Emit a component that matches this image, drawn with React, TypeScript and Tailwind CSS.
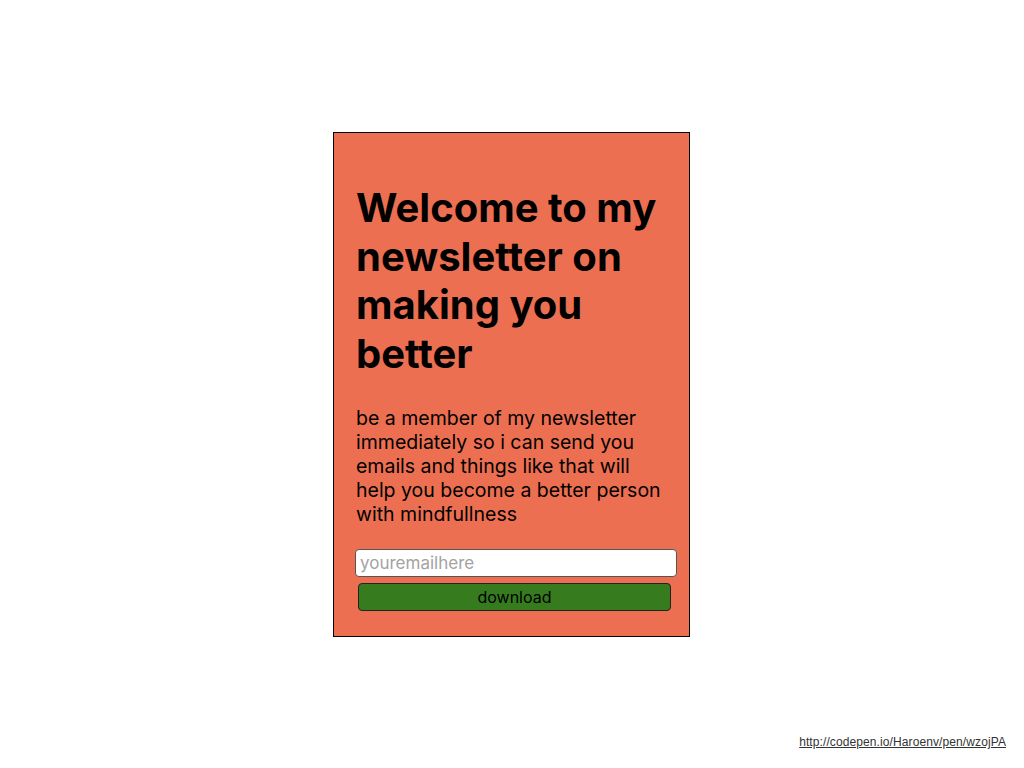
const App = () => {
  return (
    <div className="relative h-[768px] w-full bg-white font-['Inter','Liberation_Sans',sans-serif] text-black">
      <div className="pt-[132px] pl-[333px]">
        <div className="w-[357px] h-[505px] border border-black bg-[#ed6f51] px-[22px] pt-[51px]">
          <h1 className="text-[40px] font-bold leading-[48.5px]">
            Welcome to my newsletter on making you better
          </h1>
          <p className="mt-[28px] text-[19.5px] leading-[24px]">
            be a member of my newsletter immediately so i can send you emails
            and things like that will help you become a better person with
            mindfullness
          </p>
          <input
            type="email"
            placeholder="youremailhere"
            className="
            mt-[23px]
            -ml-px
            block
            w-[322px]
            h-[28px]
            px-[4px]
            bg-white
            border
            border-[#555]
            rounded-[4px]
            text-[17px]
            placeholder:text-[#a3a3a3]
            "
          />
          <button
            className="
            mt-[6px]
            ml-[2px]
            block
            w-[313px]
            h-[28px]
            bg-[#367c1f]
            border
            border-[#222]
            rounded-[4px]
            text-[16px]
            text-black
            "
          >
            download
          </button>
        </div>
      </div>
      <a
        href="#"
        className="absolute right-[18px] top-[733px] text-[12px] tracking-[0.1px] text-[#333] underline font-['Liberation_Sans',sans-serif]"
      >
        http://codepen.io/Haroenv/pen/wzojPA
      </a>
    </div>
  );
};

export default App;
